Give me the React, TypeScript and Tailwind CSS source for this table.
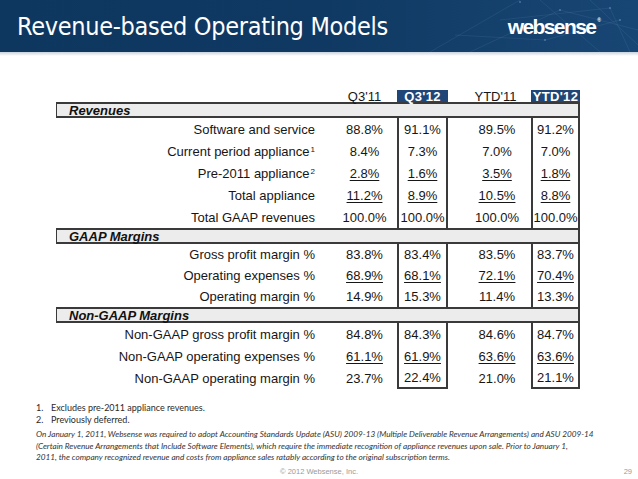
import React from "react";

type Row = {
  label: React.ReactNode;
  v: [string, string, string, string];
  u?: boolean;
};

const revenueRows: Row[] = [
  { label: "Software and service", v: ["88.8%", "91.1%", "89.5%", "91.2%"] },
  {
    label: (
      <>
        Current period appliance<sup className="text-[8px] relative -top-[1px] ml-[1px]">1</sup>
      </>
    ),
    v: ["8.4%", "7.3%", "7.0%", "7.0%"],
  },
  {
    label: (
      <>
        Pre-2011 appliance<sup className="text-[8px] relative -top-[1px] ml-[1px]">2</sup>
      </>
    ),
    v: ["2.8%", "1.6%", "3.5%", "1.8%"],
    u: true,
  },
  { label: "Total appliance", v: ["11.2%", "8.9%", "10.5%", "8.8%"], u: true },
  { label: "Total GAAP revenues", v: ["100.0%", "100.0%", "100.0%", "100.0%"] },
];

const gaapRows: Row[] = [
  { label: "Gross profit  margin %", v: ["83.8%", "83.4%", "83.5%", "83.7%"] },
  { label: "Operating expenses %", v: ["68.9%", "68.1%", "72.1%", "70.4%"], u: true },
  { label: "Operating margin %", v: ["14.9%", "15.3%", "11.4%", "13.3%"] },
];

const nonGaapRows: Row[] = [
  { label: "Non-GAAP gross profit margin %", v: ["84.8%", "84.3%", "84.6%", "84.7%"] },
  { label: "Non-GAAP operating expenses %", v: ["61.1%", "61.9%", "63.6%", "63.6%"], u: true },
  { label: "Non-GAAP operating margin %", v: ["23.7%", "22.4%", "21.0%", "21.1%"] },
];

function DataRow({ row, h, last }: { row: Row; h: string; last?: boolean }) {
  const ul = row.u ? "underline underline-offset-[2px] decoration-[1px]" : "";
  return (
    <div className={`flex ${h} items-center text-[13px] text-[#161616] leading-none`}>
      <div className="w-[274px] h-full flex items-center justify-end pr-[15px] whitespace-nowrap">
        {row.label}
      </div>
      <div className="w-[67px] h-full flex items-center justify-center pl-[2px]">
        <span className={ul}>{row.v[0]}</span>
      </div>
      <div
        className={`w-[51px] h-full flex items-center justify-center border-l-2 border-r-2 border-[#3a3a3a] ${
          last ? "border-b-2" : ""
        }`}
      >
        <span className={ul}>{row.v[1]}</span>
      </div>
      <div className="w-[83px] h-full flex items-center justify-center pl-[15px]">
        <span className={ul}>{row.v[2]}</span>
      </div>
      <div
        className={`w-[49px] h-full flex items-center justify-center border-l-2 border-r-2 border-[#3a3a3a] ${
          last ? "border-b-2" : ""
        }`}
      >
        <span className={ul}>{row.v[3]}</span>
      </div>
    </div>
  );
}

function Section({ title }: { title: string }) {
  return (
    <div className="h-[16px] bg-[#ececec] border-t-2 border-b-2 border-l border-r-2 border-[#3a3a3a] flex items-center pl-[12px]">
      <span className="text-[13px] font-bold italic text-[#111] leading-none">{title}</span>
    </div>
  );
}

export default function App() {
  return (
    <div className="w-[638px] h-[479px] bg-white overflow-hidden relative font-['Liberation_Sans',Arial,sans-serif]">
      {/* Header band */}
      <div className="relative h-[52px] bg-gradient-to-r from-[#0e3760] via-[#0f3962] to-[#184674] flex items-center justify-between pl-[17px] pr-[37px] overflow-hidden">
        <svg className="absolute inset-0 w-full h-full" viewBox="0 0 638 52" preserveAspectRatio="none">
          <g stroke="#6f95bd" strokeOpacity="0.22" strokeWidth="0.7" fill="none">
            <path d="M430 52 L520 0" />
            <path d="M470 52 L560 10 L638 30" />
            <path d="M540 0 L600 52" />
            <path d="M590 0 L638 45" />
            <path d="M500 20 L610 8 L630 52" />
            <path d="M455 35 L545 40 L620 20" />
          </g>
          <g fill="#9cc0e6" fillOpacity="0.4">
            <circle cx="560" cy="10" r="1" />
            <circle cx="610" cy="8" r="1" />
            <circle cx="545" cy="40" r="1" />
            <circle cx="520" cy="2" r="1" />
            <circle cx="620" cy="20" r="1" />
          </g>
        </svg>
        <div className="relative text-white text-[25px] leading-none font-['DejaVu_Sans_Condensed','DejaVu_Sans',sans-serif] tracking-[-0.3px] whitespace-nowrap">
          Revenue-based Operating Models
        </div>
        <div className="relative text-white text-[21px] font-bold leading-none tracking-[-1.6px] font-['Liberation_Sans',Arial,sans-serif] flex items-start">
          websense
          <span className="text-[5px] tracking-normal ml-[2px] mt-[2px]">®</span>
        </div>
      </div>
      <div className="h-[4px] bg-gradient-to-b from-[#c9d3dd] to-white" />

      {/* Table */}
      <div className="pl-[56px] pt-[34px]">
        <div className="w-[524px]">
          {/* Column headers */}
          <div className="flex h-[12px] text-[13px] leading-none text-[#161616]">
            <div className="w-[274px]" />
            <div className="w-[67px] flex items-center justify-center pl-[2px]">Q3'11</div>
            <div className="w-[51px] bg-[#1f4677] text-white font-bold flex items-center justify-center tracking-[0.3px]">
              Q3'12
            </div>
            <div className="w-[83px] flex items-center justify-center pl-[12px]">YTD'11</div>
            <div className="w-[49px] bg-[#1f4677] text-white font-bold flex items-center justify-center tracking-[0.3px]">
              YTD'12
            </div>
          </div>

          <Section title="Revenues" />
          {revenueRows.map((r, i) => (
            <DataRow key={i} row={r} h="h-[22px]" />
          ))}
          <Section title="GAAP Margins" />
          {gaapRows.map((r, i) => (
            <DataRow key={i} row={r} h="h-[21px]" />
          ))}
          <Section title="Non-GAAP Margins" />
          {nonGaapRows.map((r, i) => (
            <DataRow key={i} row={r} h="h-[22px]" last={i === nonGaapRows.length - 1} />
          ))}
        </div>
      </div>

      {/* Footnotes */}
      <div className="pl-[36px] mt-[13px] font-['Lato',sans-serif] text-[#2a2a2a]">
        <div className="flex text-[9px] leading-[12px]">
          <span className="w-[15px]">1.</span>
          <span>Excludes pre-2011 appliance revenues.</span>
        </div>
        <div className="flex text-[9px] leading-[12px]">
          <span className="w-[15px]">2.</span>
          <span>Previously deferred.</span>
        </div>
        <div className="mt-[3px] text-[8.2px] italic leading-[11.5px] whitespace-nowrap text-[#333]">
          <div>
            On January 1, 2011, Websense was required to adopt Accounting Standards Update (ASU) 2009-13 (Multiple
            Deliverable Revenue Arrangements) and ASU 2009-14
          </div>
          <div>
            (Certain Revenue Arrangements that Include Software Elements), which require the immediate recognition of
            appliance revenues upon sale. Prior to January 1,
          </div>
          <div>
            2011, the company recognized revenue and costs from appliance sales ratably according to the original
            subscription terms.
          </div>
        </div>
      </div>
      <div className="absolute left-0 right-0 top-[468px] flex justify-center text-[7.5px] text-[#9a9a9a] leading-none">
        © 2012 Websense, Inc.
      </div>
      <div className="absolute right-[6px] top-[468px] text-[7.5px] text-[#9a9a9a] leading-none">29</div>
    </div>
  );
}
